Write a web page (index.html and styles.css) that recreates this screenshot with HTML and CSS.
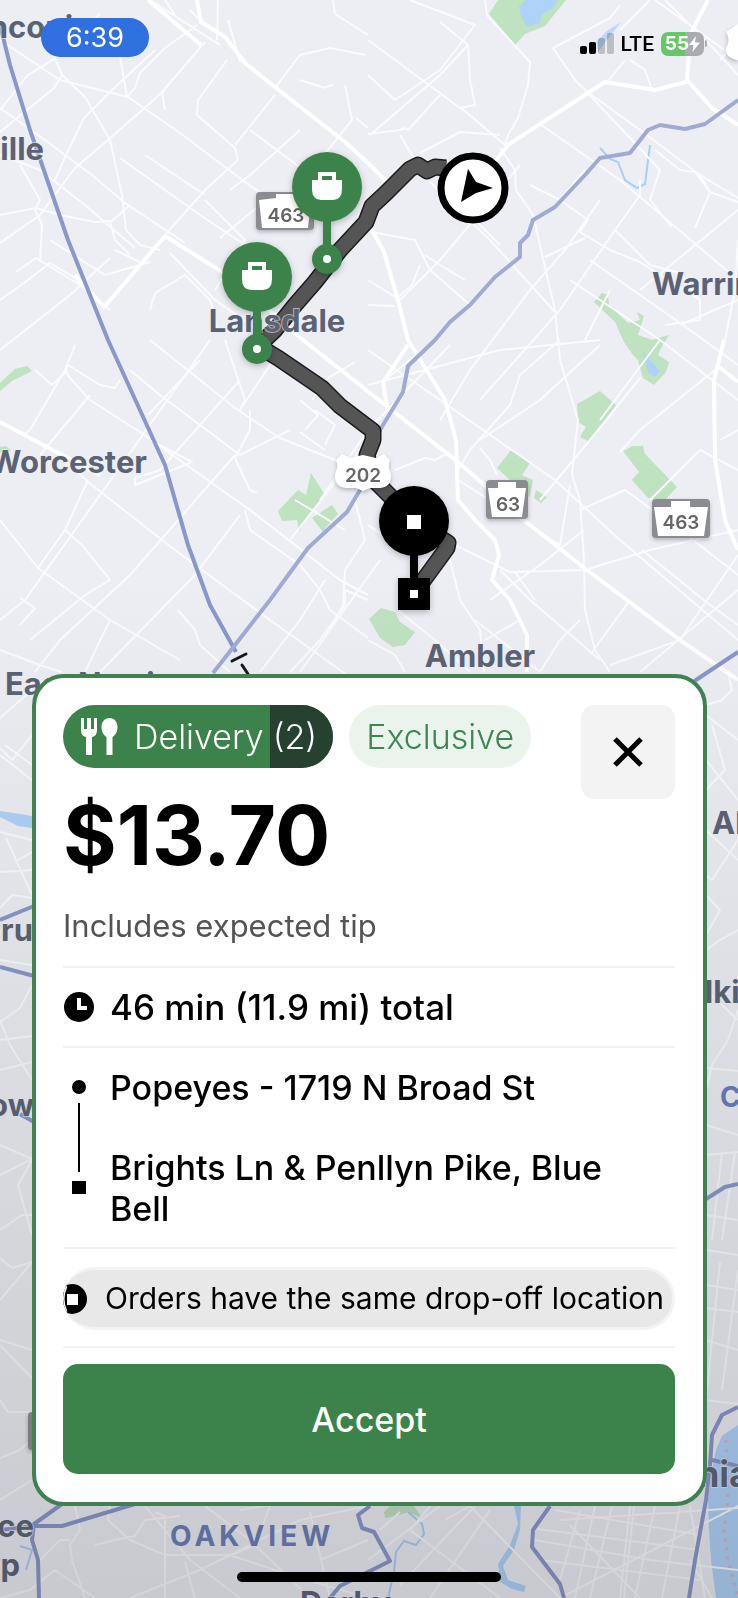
FILE: index.html
```html
<!DOCTYPE html>
<html lang="en">
<head>
    <meta charset="UTF-8">
    <meta name="viewport" content="width=device-width, initial-scale=1.0">
    <title>Delivery offer</title>
    <link rel="stylesheet" href="styles.css">
</head>
<body>
    <svg class="map" viewBox="0 0 738 1598" preserveAspectRatio="xMidYMid slice" aria-hidden="true">
        <defs>
            <linearGradient id="shade" x1="0" y1="0" x2="0" y2="1">
                <stop offset="0.36" stop-color="#22242c" stop-opacity="0"/>
                <stop offset="0.75" stop-color="#22242c" stop-opacity="0.11"/>
                <stop offset="1" stop-color="#22242c" stop-opacity="0.18"/>
            </linearGradient>
            <g id="bag">
                <path d="M-9 -14h18v8h6v9q0 11 -9 11h-12q-9 0 -9 -11v-9h6z"/>
                <path class="hole" d="M-5 -10h10v4h-10z"/>
            </g>
        </defs>

        <!-- parks -->
        <g class="park">
            <path d="M498 0L489 14L515 45L525 34L545 26L566 0z"/>
            <path d="M594 302L602 293L608 295L609 305L628 323L640 320L637 312L644 316L638 335L652 340L669 335L661 348L658 355L669 362L666 372L654 385L643 378L638 360L633 355L624 342L615 322z"/>
            <path d="M577 404L600 391L616 405L590 442L580 437L586 427L578 422z"/>
            <path d="M623 451L633 446L643 446L645 454L677 487L665 500L648 498L632 480L639 472z"/>
            <path d="M497 468L512 449L530 463L522 475L533 480L530 497L520 492L510 480z"/>
            <path d="M536 490L547 497L541 503L534 498z"/>
            <path d="M369 619L381 608L395 612L400 622L415 632L405 645L393 647L380 638z"/>
            <path d="M278 511L298 490L306 495L311 473L325 495L308 517L299 531L297 520L282 521z"/>
            <path d="M312 518L332 505L338 514L328 525L323 532z"/>
            <path d="M0 383L15 369L27 366L32 371L12 381L0 391z"/>
            <path d="M0 447L6 446L11 450L5 454L0 452z"/>
            <path d="M384 1512L390 1506L414 1506L422 1518L408 1512L396 1516L385 1518z"/>
        </g>

        <!-- water -->
        <g class="water">
            <path d="M519 6L526 0L558 0L552 9L541 15L540 23L527 27L521 16z"/>
            <path d="M643 352L660 371L655 377L648 372z"/>
            <path d="M621 22L607 31L596 42L598 52L610 36z" opacity=".8"/>
            <path d="M0 811L20 814L32 816L32 828L18 826L0 817z"/>
            <path d="M738 1425L722 1436L716 1450L711 1475L708 1500L709 1530L711 1560L716 1598L738 1598z"/>
            <path d="M514 1506L518 1524L510 1545L498 1564L500 1582L512 1589L524 1592L526 1586L508 1580L503 1566L514 1550L520 1530L521 1506z"/>
        </g>
        <g class="stream">
            <path d="M600 148L610 159L618 162L625 180L637 188L645 184L650 145"/>
            <path d="M408 1512L422 1524L424 1534L416 1545L404 1541L396 1552L394 1572L388 1598"/>
            <path d="M20 1546L32 1550L26 1570"/>
        </g>
        <path class="ferry" d="M726 1440L728 1500L724 1530L728 1560L738 1598"/>

        <!-- side streets -->
        <g class="road">
            <path d="M0 110L28 75L53 60L100 14M0 40L60 80L128 97L180 133L245 182L300 220M28 75L55 58L62 75L54 88L0 132"/>
            <path d="M62 75L85 97L110 140L122 195L126 230L140 245L160 250M55 180L66 155L84 118L112 90L155 50M118 45L127 97L135 88L140 73L165 48L197 25"/>
            <path d="M0 155L40 170L85 205L135 248M20 165L40 200L35 210M0 215L36 208L60 215L95 222L112 221L130 205"/>
            <path d="M0 243L40 215L75 168L108 140L165 90M120 158L200 215L245 245M50 240L105 275L150 262M145 155L205 195"/>
            <path d="M0 108L45 140L92 175L125 203L185 243M165 110L162 92L205 42M227 60L198 100L197 115L235 148L238 160L205 190L165 235"/>
            <path d="M275 95L235 145M250 130L310 175M275 88L300 55L330 48L365 55M345 85L352 120L320 160M325 87L333 85M333 0L335 14L368 35"/>
            <path d="M150 0L220 45M165 0L175 15M190 10L200 20M218 0L217 40M228 20L240 62M300 80L325 88M356 118L368 128"/>
            <path d="M0 300L28 280L50 263L75 278L95 300M16 272L36 258L80 285L110 310M40 262L42 225L35 210M150 310L155 293L185 275L210 300L218 330M115 250L140 262M110 221L115 240L130 255"/>
            <path d="M0 350L70 295L110 258M170 253L215 300L265 335M220 238L260 205M230 190L250 175L300 130M205 200L245 240L215 290"/>
            <path d="M368 75L395 100L440 70L475 25L410 0M368 40L460 108L475 105L470 80L468 45L440 22"/>
            <path d="M485 0L487 15L530 62L528 85L518 118L508 135L505 145L460 107M468 45L440 75L370 135M368 134L400 130L405 128L408 130L440 95"/>
            <path d="M400 135L418 165M420 153L460 132L500 135M500 148L515 170L516 190L533 215L548 280L555 310L560 360L578 420L572 475L580 500L584 560L585 610L595 650L610 672"/>
            <path d="M553 48L575 80L585 90L640 130L700 175L738 198M553 48L610 18L620 5M620 30L650 0M655 0L738 60"/>
            <path d="M630 60L645 70L652 90M605 85L625 60M540 124L620 180L738 280M430 182L490 240L555 312M520 165L440 260L400 300M500 245L440 185"/>
            <path d="M585 90L660 170L650 200L670 225L672 227M640 180L640 195L615 230L560 310L480 400M700 175L710 192L738 202M655 150L680 170L695 172L710 192L695 228"/>
            <path d="M600 200L565 250L530 290L470 370L440 420M545 257L585 238M560 200L588 220L580 232L610 250L640 262L700 300M530 185L560 200L585 170"/>
            <path d="M615 230L650 265L680 273L700 300L700 320L665 325M665 0L715 50L738 75M720 60L738 40M640 290L738 210M725 340L735 290L738 240"/>
            <path d="M425 255L440 265L465 280M400 300L368 280M368 305L395 306M420 265L412 285L395 300M470 305L430 270L415 240L372 232"/>
            <path d="M570 280L660 340L738 400M585 340L610 290M660 340L600 420M590 260L690 330L738 365M680 325L738 300M715 370L640 430L620 452"/>
            <path d="M368 350L440 400L555 480L620 540L738 640M435 340L385 380L383 395M450 345L368 430L320 500M368 385L500 350L600 340M560 340L520 375L510 405L470 450L455 475"/>
            <path d="M640 378L590 440L540 500M600 345L540 400L480 440M480 448L490 460L497 475M455 478L560 545L570 485M580 510L625 490L680 530L738 575"/>
            <path d="M738 530L650 550L585 570L510 572L455 545M642 550L710 605L738 625M738 555L690 625L680 640L610 665M450 560L460 600L480 630L484 672M490 600L540 565L584 530"/>
            <path d="M500 570L530 600L600 660M515 572L535 600M630 600L590 655M738 470L700 450L650 500M720 440L738 430M395 470L425 458L435 460L450 452M368 525L420 560M400 612L435 640L470 672M485 640L520 620M475 620L540 672"/>
            <path d="M738 590L640 672M368 640L395 655L405 672M580 620L560 640L540 672"/>
            <path d="M150 340L235 408L280 438L335 460L368 480M225 340L245 400L240 410L280 350M200 360L148 415M75 345L65 370L70 378L90 400L140 432L250 510L340 580L368 595"/>
            <path d="M210 340L125 460L75 530L25 600L0 620M68 365L30 430L22 436M68 365L100 385L115 388L120 380M130 370L160 395L240 455L290 430M90 395L40 455M0 422L60 455L88 482L175 550L270 620L368 690"/>
            <path d="M35 370L52 385L68 370M250 410L250 430L235 458L250 490L257 493M235 455L130 575L60 640L35 672M240 515L195 575L100 672M245 510L250 530L300 565L320 590L330 610L368 638M290 540L368 440"/>
            <path d="M300 400L318 415L305 430M315 410L335 425L325 445M300 432L325 450M312 400L325 380L355 362M295 500L345 530M88 480L65 530L82 545L110 580L85 595L30 640M65 530L38 568L0 520"/>
            <path d="M38 568L110 620L180 660M20 598L35 608L20 625M0 650L40 665L62 672M110 620L85 672M178 610L195 630L200 645L230 672M325 580L300 620L260 672M368 600L345 590L345 605L320 640L290 672M355 500L365 540L345 570L343 605L330 630M150 440L192 462L135 485L135 478L160 470L240 380M380 560L300 672"/>
        </g>

        <!-- strips beside the card and the city grid below it -->
        <g class="road">
            <path d="M0 718L32 690M0 748L12 760L32 735M0 755L32 780M5 745L32 765M0 832L32 840M6 838L32 895M15 862L32 852M0 872L32 870M0 908L12 895L32 898M0 960L32 965M32 985L20 1008L0 1022M0 1020L10 1045L32 1080M0 1040L32 1036M0 1070L32 1062M0 1145L32 1159L0 1175M32 1160L18 1185L32 1235M0 1230L22 1215L32 1215M0 1258L12 1268L32 1262L0 1300M0 1340L32 1350M0 1345L32 1378M0 1400L8 1412L32 1412M0 1458L20 1450L32 1440M0 1500L32 1480"/>
            <path d="M706 705L722 700L732 690L728 672M706 715L738 740M712 725L725 770L706 790M706 760L738 800M706 830L738 860M738 840L712 880L706 875M706 895L720 910L706 935M706 950L720 940L738 930M706 990L738 1020M738 1010L728 1040L712 1065L706 1090M706 1068L738 1071M706 1125L738 1135M706 1155L738 1152M722 1152L712 1240M735 1152L722 1240M706 1215L738 1220M706 1250L738 1255M706 1285L738 1290M706 1308L738 1312M720 1262L706 1400M738 1270L722 1390M706 1340L738 1350M706 1400L738 1404"/>
            <path d="M75 1506L80 1530L70 1545L72 1560L85 1598M110 1506L108 1520L130 1540L165 1555L230 1555L290 1575L368 1598M145 1506L190 1560L240 1598M40 1560L60 1540L70 1540M95 1545L115 1540L135 1536L145 1520L180 1516M0 1598L30 1590L55 1570L95 1598M165 1598L165 1516L155 1512M130 1598L200 1570L300 1520L368 1506M205 1506L250 1540L310 1598M185 1562L195 1598M270 1506L255 1545L220 1560M310 1512L330 1598M320 1560L368 1540M240 1510L300 1500"/>
            <path d="M430 1506L410 1530L500 1598M445 1520L470 1506L560 1598M475 1506L400 1585M490 1510L430 1598M380 1530L400 1512M368 1560L440 1506M535 1540L650 1560L738 1570M555 1510L700 1535M530 1528L700 1550M580 1510L560 1580M595 1506L575 1598M612 1506L590 1598M630 1506L620 1598M634 1506L624 1598M655 1506L635 1598M680 1506L662 1598M690 1506L705 1598M540 1560L700 1580M738 1506L560 1598M570 1525L640 1598M560 1520L738 1508M690 1560L712 1598"/>
        </g>

        <!-- main roads -->
        <g class="road major">
            <path d="M197 0L201 22L225 37L245 63L285 95L345 142L368 163L395 190"/>
            <path d="M105 306L165 236L235 280L303 340L370 393L458 462L530 525L583 567L680 640L738 680"/>
            <path d="M372 230L384 252L398 300L408 340L445 400L456 440L458 500L475 520L495 540L499 555L492 580L510 600L527 635L527 672"/>
            <path d="M708 0L690 35L687 80L712 108L738 125M686 82L655 90L605 82L540 124L508 145L490 168"/>
            <path d="M724 340L714 380L715 460L725 520L738 550M718 366L738 382"/>
            <path d="M0 422L100 475M75 275L105 308M148 0L201 45M408 345L383 382L388 412"/>
        </g>

        <!-- highways -->
        <path class="highway" d="M0 25L10 65L30 130L68 240L108 340L165 465L188 545L210 605L236 652"/>
        <path class="highway thin" d="M738 100L705 124L685 129L660 125L648 130L630 153L600 158L585 175L555 207L533 220L528 235L520 243L520 257L495 277L470 305L450 322L435 340L408 366L403 392L380 430L360 490L347 512L308 548L270 600L235 645L213 673"/>
        <g class="highway">
            <path d="M738 652L690 684"/>
            <path d="M0 967L34 976M0 920L34 906"/>
            <path d="M20 1114L34 1122"/>
            <path d="M706 1199L725 1187L738 1184"/>
            <path d="M62 1504L34 1524L32 1540L38 1560L39 1598M0 1530L34 1526L62 1526L135 1504M370 1506L358 1515L362 1528L374 1532L390 1561L368 1572L340 1586L330 1598M550 1506L533 1530L532 1547L560 1584L564 1598M738 1407L722 1415L712 1435L710 1465L706 1500L695 1560L689 1598M712 1460L738 1466"/>
        </g>
        <g class="tick">
            <path d="M232 661L246 654"/>
            <path d="M242 665L248 674"/>
        </g>

        <!-- route -->
        <g class="route">
            <path id="leg" d="M446 168L435 167L427 171L418 165L410 169L385 194L372 206L366 222L340 250L315 282L295 305L275 330L258 346L278 358L322 388L340 406L373 431L373 440L367 455L372 478L391 497L414 521L448 543L447 548L420 585"/>
            <use href="#leg" class="fill"/>
        </g>

        <!-- route shields -->
        <g class="shield">
            <g>
                <rect x="256" y="192" width="58" height="38" rx="4"/>
                <path d="M259 200L276 198L276 194L297 194L297 200L311 200L308 228L262 228z"/>
                <text x="286" y="222">463</text>
            </g>
            <g>
                <rect x="486" y="480" width="42" height="39" rx="4"/>
                <path d="M488 488L498 488L498 482L516 482L516 488L526 488L522 517L492 517z"/>
                <text x="508" y="511">63</text>
            </g>
            <g>
                <rect x="652" y="499" width="58" height="39" rx="4"/>
                <path d="M654 507L671 507L671 501L690 501L690 507L708 507L704 536L658 536z"/>
                <text x="681" y="529">463</text>
            </g>
            <g>
                <path d="M342 454L350 458L363 455L376 458L384 454L390 460Q387 466 391 474Q392 487 380 488L370 488L363 491L356 488L346 488Q334 487 335 474Q339 466 336 460z"/>
                <text x="363" y="482">202</text>
            </g>
            <rect x="28" y="1412" width="42" height="38" rx="4"/>
            <path d="M738 24L732 28L726 32Q731 40 726 48Q725 58 738 60z"/>
        </g>

        <g class="place">
            <text x="-59" y="38">Franconia</text>
            <text x="44" y="160" text-anchor="end">Harleysville</text>
            <text x="652" y="295">Warrington</text>
            <text x="277" y="332" text-anchor="middle">Lansdale</text>
            <text x="147" y="473" text-anchor="end">Worcester</text>
            <text x="480" y="667" text-anchor="middle">Ambler</text>
            <text x="5" y="695">East Norriton</text>
            <text x="-19" y="941">Prussia</text>
            <text x="34" y="1116" text-anchor="end">Newtow</text>
            <text x="712" y="834">Abington</text>
            <text x="686" y="1003">Elkins Park</text>
            <text x="34" y="1537" text-anchor="end">Providence</text>
            <text x="20" y="1576" text-anchor="end">Twp</text>
            <text x="300" y="1614">Darby</text>
            <text class="city" x="750" y="1487" text-anchor="end">Philadelphia</text>
            <text class="district" x="720" y="1107">CHELTEN</text>
            <text class="district" x="170" y="1546">OAKVIEW</text>
        </g>

        <rect class="shade" width="738" height="1598" fill="url(#shade)"/>

        <!-- pickup pins -->
        <g class="pin pickup">
            <path class="stem" d="M327 215V250"/>
            <circle cx="327" cy="187" r="35"/>
            <circle cx="327" cy="259" r="15"/>
            <circle class="dot" cx="327" cy="259" r="4"/>
            <use href="#bag" x="327" y="186"/>
            <path class="stem" d="M257 305V340"/>
            <circle cx="257" cy="277" r="35"/>
            <circle cx="257" cy="349" r="15"/>
            <circle class="dot" cx="257" cy="349" r="4"/>
            <use href="#bag" x="257" y="276"/>
        </g>

        <!-- drop-off pin -->
        <g class="pin">
            <path class="stem" d="M414 550V585"/>
            <circle cx="414" cy="521" r="35"/>
            <rect x="398" y="578" width="32" height="32"/>
            <rect class="dot" x="407" y="515" width="14" height="14"/>
            <rect class="dot" x="410" y="590" width="8" height="8"/>
        </g>

        <!-- driver position -->
        <g class="driver">
            <circle cx="473" cy="188" r="32"/>
            <path d="M468 169L476 182L493 188L476 193L461 202z"/>
        </g>
    </svg>

    <header class="status-bar">
        <time class="clock">6:39</time>
        <div class="status-icons">
            <svg width="34" height="21" viewBox="0 0 34 21" aria-hidden="true">
                <rect x="0" y="13" width="7" height="8" rx="2"/>
                <rect x="9" y="9" width="7" height="12" rx="2"/>
                <rect x="18" y="5" width="7" height="16" rx="2" opacity=".2"/>
                <rect x="27" y="0" width="7" height="21" rx="2" opacity=".2"/>
            </svg>
            <span class="network">LTE</span>
            <span class="battery">55<svg width="11" height="16" viewBox="0 0 11 16" aria-hidden="true"><path d="M7 0L0 9h4.500L3.500 16L11 6.500H6z" fill="#fff"/></svg></span>
        </div>
    </header>

    <main class="offer">
        <div class="offer-top">
            <div class="offer-summary">
                <div class="chips">
                    <div class="chip delivery">
                        <span class="chip-name">
                            <svg width="38" height="37" viewBox="0 0 38 37" aria-hidden="true">
                                <path d="M1 0h3v11h3V0h4v11h3V0h3v12q0 6 -5 7v18h-6V19q-5 -1 -5 -7z"/>
                                <path d="M29.500 0c5 0 8 4 8 9s-2 8 -5 10v18h-6V19c-3 -2 -5 -5 -5 -10s3 -9 8 -9z"/>
                            </svg>
                            Delivery
                        </span>
                        <span class="chip-count">(2)</span>
                    </div>
                    <div class="chip exclusive">Exclusive</div>
                </div>
                <h1 class="price">$13.70</h1>
            </div>
            <button type="button" class="close" aria-label="Close">
                <svg width="30" height="30" viewBox="0 0 30 30" aria-hidden="true">
                    <path d="M2 2L28 28M28 2L2 28"/>
                </svg>
            </button>
        </div>
        <p class="tip">Includes expected tip</p>

        <div class="row total">
            <svg width="32" height="41" viewBox="0 0 32 41" aria-hidden="true">
                <circle cx="16" cy="20" r="15"/>
                <path d="M16 11V21H24" fill="none" stroke="#fff" stroke-width="4"/>
            </svg>
            <span>46 min (11.9 mi) total</span>
        </div>

        <div class="row">
            <svg width="32" height="134" viewBox="0 0 32 134" aria-hidden="true">
                <circle cx="16" cy="20" r="7"/>
                <rect x="15" y="36" width="2" height="69"/>
                <rect x="9" y="114" width="14" height="13"/>
            </svg>
            <ol class="stops">
                <li>Popeyes - 1719 N Broad St</li>
                <li>Brights Ln &amp; Penllyn Pike, Blue Bell</li>
            </ol>
        </div>

        <div class="row note-row">
            <div class="note">
                <svg width="28" height="32" viewBox="0 0 28 32" aria-hidden="true">
                    <circle cx="-12" cy="16" r="15"/>
                    <circle cx="9" cy="16" r="15"/>
                    <path d="M3 3Q-3 16 3 29" fill="none" stroke="#fff" stroke-width="3"/>
                    <rect x="4" y="11" width="11" height="11" fill="#fff"/>
                </svg>
                <span>Orders have the same drop-off location</span>
            </div>
        </div>

        <div class="row accept-row">
            <button type="button" class="accept">Accept</button>
        </div>
    </main>

    <div class="home-indicator"></div>
</body>
</html>
```
FILE: styles.css
```css
* {
    box-sizing: border-box;
}
body {
    margin: 0;
    min-height: 100vh;
    display: flex;
    flex-direction: column;
    position: relative;
    overflow-x: hidden;
    font-family: Inter, "Noto Sans", sans-serif;
    color: #000;
    background-color: #edeef4;
}

/* map */
.map {
    position: absolute;
    inset: 0;
    width: 100%;
    height: 100%;
    z-index: -1;
}
.park {
    fill: #bfe2c1;
}
.water {
    fill: #afd2f8;
}
.stream {
    fill: none;
    stroke: #a9cff6;
    stroke-width: 2;
}
.ferry {
    fill: none;
    stroke: #d5b3c4;
    stroke-width: 3;
    stroke-dasharray: 3 6;
}
.road {
    fill: none;
    stroke: #fafbfd;
    stroke-width: 2;
    stroke-linejoin: round;
}
.major {
    stroke: #fff;
    stroke-width: 4;
}
.highway {
    fill: none;
    stroke: #8997c9;
    stroke-width: 4;
    stroke-linejoin: round;
}
.thin {
    stroke: #9fabd2;
}
.tick {
    stroke: #15171c;
    stroke-width: 3;
    stroke-linecap: round;
}
.route {
    fill: none;
    stroke: #1c1c1c;
    stroke-width: 17;
    stroke-linejoin: round;
}
.route .fill {
    stroke: #555;
    stroke-width: 14;
}
.shield {
    filter: drop-shadow(0 2px 2px rgba(0, 0, 0, 0.25));
    font-size: 19px;
    font-weight: 600;
    text-anchor: middle;
}
.shield rect {
    fill: #8b8c91;
}
.shield path {
    fill: #fff;
}
.shield text {
    fill: #666;
}
.place {
    font-size: 31px;
    font-weight: 700;
    fill: #5b6273;
    stroke: rgba(237, 238, 244, 0.6);
    stroke-width: 2;
    paint-order: stroke;
}
.city {
    font-size: 36px;
}
.district {
    font-size: 28px;
    fill: #6a7db5;
    letter-spacing: 4px;
}
.pin {
    fill: #000;
    stroke: none;
    filter: drop-shadow(0 2px 3px rgba(0, 0, 0, 0.25));
}
.pickup {
    fill: #3b834a;
}
.stem {
    stroke: #000;
    stroke-width: 8;
}
.pickup .stem {
    stroke: #3b834a;
}
.dot,
.pickup use {
    fill: #fff;
}
.hole {
    fill: #3b834a;
}
.driver circle {
    fill: #fff;
    stroke: #000;
    stroke-width: 7;
}

/* status bar */
.status-bar {
    display: flex;
    align-items: center;
    justify-content: space-between;
    padding: 18px 34px 0 41px;
}
.clock {
    width: 108px;
    border-radius: 20px;
    background-color: #2f6fe0;
    color: #fff;
    font-size: 27px;
    line-height: 39px;
    text-align: center;
}
.status-icons {
    display: flex;
    align-items: center;
    gap: 7px;
    margin-top: 12px;
}
.network {
    font-size: 21px;
    font-weight: 500;
    font-family: Roboto, sans-serif;
}
.battery {
    display: flex;
    align-items: center;
    justify-content: center;
    width: 43px;
    height: 24px;
    border-radius: 7px;
    background: linear-gradient(to right, #66c767 55%, #a9abb0 55%);
    color: #fff;
    font-size: 19px;
    font-weight: 700;
    position: relative;
}
.battery::after {
    content: "";
    position: absolute;
    left: 44px;
    width: 2px;
    height: 7px;
    border-radius: 0 2px 2px 0;
    background-color: #a9abb0;
}

/* offer card */
.offer {
    margin: auto 31px 66px 32px;
    padding: 27px 28px 28px 27px;
    border: 4px solid #3f8150;
    border-radius: 32px;
    background-color: #fff;
}
.offer-top {
    display: flex;
    justify-content: space-between;
    align-items: flex-start;
}
.chips {
    display: flex;
    gap: 16px;
}
.chip {
    display: flex;
    height: 63px;
    border-radius: 32px;
    overflow: hidden;
    font-size: 34px;
    font-weight: 300;
    line-height: 63px;
}
.delivery {
    background-color: #3b834a;
    color: #fff;
}
.chip-name {
    display: flex;
    align-items: center;
    gap: 16px;
    padding: 0 6px 0 17px;
}
.chip-name svg {
    fill: #fff;
}
.chip-count {
    padding: 0 16px 0 3px;
    background-color: #27412f;
}
.exclusive {
    padding: 0 17px;
    background-color: #eaf4ec;
    color: #3e8550;
}
.close {
    display: flex;
    align-items: center;
    justify-content: center;
    width: 94px;
    height: 94px;
    padding: 0;
    border: none;
    border-radius: 14px;
    background-color: #f3f3f3;
    cursor: pointer;
}
.close path {
    stroke: #000;
    stroke-width: 5;
}
.price {
    margin: 18px 0 0;
    font-size: 82px;
    font-weight: 700;
    line-height: 100px;
}
.tip {
    margin: 20px 0;
    color: #545454;
    font-size: 31px;
    line-height: 40px;
}
.row {
    display: flex;
    gap: 15px;
    padding: 19px 0 18px;
    border-top: 2px solid #f1f1f1;
    font-size: 34px;
    font-weight: 500;
    line-height: 41px;
}
.row svg {
    flex: none;
}
.total {
    font-size: 35px;
}
.stops {
    display: grid;
    gap: 39px;
    margin: 0;
    padding: 0 16px 0 0;
    list-style-type: none;
}
.note-row {
    padding: 18px 0 16px;
}
.note {
    display: flex;
    align-items: center;
    gap: 14px;
    flex: 1;
    min-width: 0;
    height: 63px;
    border: 3px solid #f3f3f3;
    border-left: none;
    border-radius: 32px;
    background-color: #e8e8e8;
    font-size: 30px;
    font-weight: 400;
    white-space: nowrap;
    overflow: hidden;
}
.accept-row {
    padding: 16px 0 0;
}
.accept {
    flex: 1;
    height: 110px;
    border: none;
    border-radius: 15px;
    background-color: #3b834a;
    color: #fff;
    font-family: inherit;
    font-size: 34px;
    font-weight: 500;
    cursor: pointer;
}
.home-indicator {
    width: 264px;
    height: 10px;
    margin: 0 auto 16px;
    border-radius: 5px;
    background-color: #000;
}
```
